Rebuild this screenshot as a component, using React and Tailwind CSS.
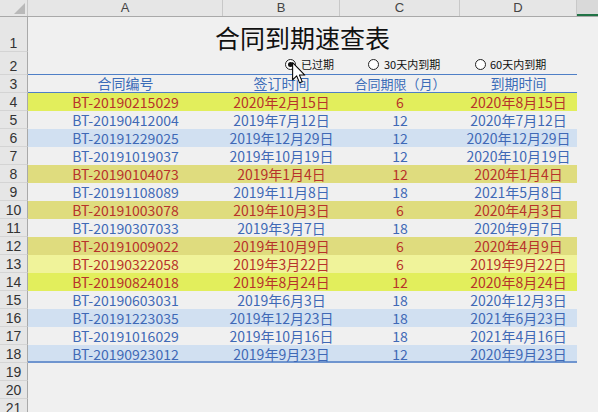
import React from "react";

const YELLOW = "bg-[#e2ee5c]";
const OLIVE = "bg-[#dfdc7e]";
const PALE = "bg-[#f0f39a]";
const BLUE = "bg-[#d1e0f1]";
const GRAY = "bg-[#f0f0f0]";

const rows = [
  { n: 4, id: "BT-20190215029", sign: "2020年2月15日", term: 6, due: "2020年8月15日", bg: YELLOW, red: true },
  { n: 5, id: "BT-20190412004", sign: "2019年7月12日", term: 12, due: "2020年7月12日", bg: GRAY },
  { n: 6, id: "BT-20191229025", sign: "2019年12月29日", term: 12, due: "2020年12月29日", bg: BLUE },
  { n: 7, id: "BT-20191019037", sign: "2019年10月19日", term: 12, due: "2020年10月19日", bg: GRAY },
  { n: 8, id: "BT-20190104073", sign: "2019年1月4日", term: 12, due: "2020年1月4日", bg: OLIVE, red: true },
  { n: 9, id: "BT-20191108089", sign: "2019年11月8日", term: 18, due: "2021年5月8日", bg: GRAY },
  { n: 10, id: "BT-20191003078", sign: "2019年10月3日", term: 6, due: "2020年4月3日", bg: OLIVE, red: true },
  { n: 11, id: "BT-20190307033", sign: "2019年3月7日", term: 18, due: "2020年9月7日", bg: GRAY },
  { n: 12, id: "BT-20191009022", sign: "2019年10月9日", term: 6, due: "2020年4月9日", bg: OLIVE, red: true },
  { n: 13, id: "BT-20190322058", sign: "2019年3月22日", term: 6, due: "2019年9月22日", bg: PALE, red: true },
  { n: 14, id: "BT-20190824018", sign: "2019年8月24日", term: 12, due: "2020年8月24日", bg: YELLOW, red: true },
  { n: 15, id: "BT-20190603031", sign: "2019年6月3日", term: 18, due: "2020年12月3日", bg: GRAY },
  { n: 16, id: "BT-20191223035", sign: "2019年12月23日", term: 18, due: "2021年6月23日", bg: BLUE },
  { n: 17, id: "BT-20191016029", sign: "2019年10月16日", term: 18, due: "2021年4月16日", bg: GRAY },
  { n: 18, id: "BT-20190923012", sign: "2019年9月23日", term: 12, due: "2020年9月23日", bg: BLUE },
];

const cjk = { fontFamily: '"Noto Sans CJK SC", "Noto Sans", sans-serif' };
const num = { fontFamily: '"Liberation Sans", Arial, sans-serif' };

function RowNum({ n, h }) {
  return (
    <div
      className={`flex w-[28px] shrink-0 items-end justify-center border-r border-b border-r-[#a9a9a9] border-b-[#d4d4d4] bg-[#e6e6e6] pb-[1px] text-[14px] leading-none text-[#333] ${h}`}
      style={num}
    >
      {n}
    </div>
  );
}

function Radio({ checked }) {
  return (
    <span className="flex h-[11px] w-[11px] items-center justify-center rounded-full border border-[#222] bg-white">
      {checked && <span className="h-[5px] w-[5px] rounded-full bg-[#111]" />}
    </span>
  );
}

function Cursor() {
  return (
    <svg className="absolute left-[292px] top-[62px]" width="14" height="22" viewBox="0 0 12 19">
      <path d="M0.5 0.5 L0.5 15.5 L4 12 L6.5 18 L8.8 17 L6.4 11.3 L11 11.3 Z" fill="#fff" stroke="#000" strokeWidth="0.9" strokeLinejoin="round" />
    </svg>
  );
}

export default function App() {
  return (
    <div className="relative h-[412px] w-[598px] overflow-hidden bg-[#f0f0f0]" style={cjk}>
      {/* column header */}
      <div className="flex h-[17px] border-b border-[#a9a9a9] bg-[#e6e6e6] text-[13px] leading-[16px] text-[#444]" style={num}>
        <div className="relative w-[28px] shrink-0 border-r border-[#c8c8c8]">
          <svg className="absolute right-[2px] bottom-[2px]" width="11" height="11" viewBox="0 0 11 11">
            <path d="M11 0 L11 11 L0 11 Z" fill="#b9b9b9" />
          </svg>
        </div>
        <div className="w-[195px] shrink-0 border-r border-[#c8c8c8] text-center">A</div>
        <div className="w-[117px] shrink-0 border-r border-[#c8c8c8] text-center">B</div>
        <div className="w-[120px] shrink-0 border-r border-[#c8c8c8] text-center">C</div>
        <div className="w-[117px] shrink-0 border-r border-[#c8c8c8] text-center">D</div>
        <div className="flex-1 border-b-2 border-[#217346] bg-[#d9d9d9]" />
      </div>

      {/* row 1 title */}
      <div className="flex">
        <RowNum n={1} h="h-[35px]" />
        <div className="flex w-[549px] items-end justify-center pb-[2px] text-[25px] leading-none text-[#111]">
          合同到期速查表
        </div>
      </div>

      {/* row 2 radios */}
      <div className="relative flex">
        <RowNum n={2} h="h-[23px]" />
        <div className="w-[549px] border-b border-[#4f7fc6]" />
        <div className="absolute left-[285px] top-[4px] flex items-center gap-[5px] text-[11px] text-[#111]">
          <Radio checked />
          <span>已过期</span>
        </div>
        <div className="absolute left-[368px] top-[4px] flex items-center gap-[5px] text-[11px] text-[#111]">
          <Radio />
          <span>30天内到期</span>
        </div>
        <div className="absolute left-[475px] top-[4px] flex items-center gap-[4px] text-[11px] text-[#111]">
          <Radio />
          <span>60天内到期</span>
        </div>
      </div>

      {/* row 3 headers */}
      <div className="flex">
        <RowNum n={3} h="h-[18px]" />
        <div className="grid w-[549px] grid-cols-[195px_117px_120px_117px] border-b border-[#4f7fc6] text-[14px] leading-[17px] text-[#3b6cb8]">
          <div className="text-center">合同编号</div>
          <div className="text-center">签订时间</div>
          <div className="text-center text-[13px]">合同期限（月）</div>
          <div className="text-center">到期时间</div>
        </div>
      </div>

      {/* data rows */}
      {rows.map((r, i) => (
        <div key={r.n} className="flex">
          <RowNum n={r.n} h="h-[18px]" />
          <div
            className={`grid h-[18px] w-[549px] grid-cols-[195px_117px_120px_117px] text-[14px] leading-[18px] ${r.bg} ${
              r.red ? "text-[#b7332b]" : "text-[#3f69b6]"
            } ${i === rows.length - 1 ? "border-b-2 border-[#6f95cf]" : ""}`}
          >
            <div className="text-center">{r.id}</div>
            <div className="text-center">{r.sign}</div>
            <div className="text-center">{r.term}</div>
            <div className="text-center">{r.due}</div>
          </div>
        </div>
      ))}

      {/* empty rows */}
      {[19, 20, 21].map((n) => (
        <div key={n} className="flex">
          <RowNum n={n} h="h-[18px]" />
        </div>
      ))}

      <Cursor />
    </div>
  );
}
